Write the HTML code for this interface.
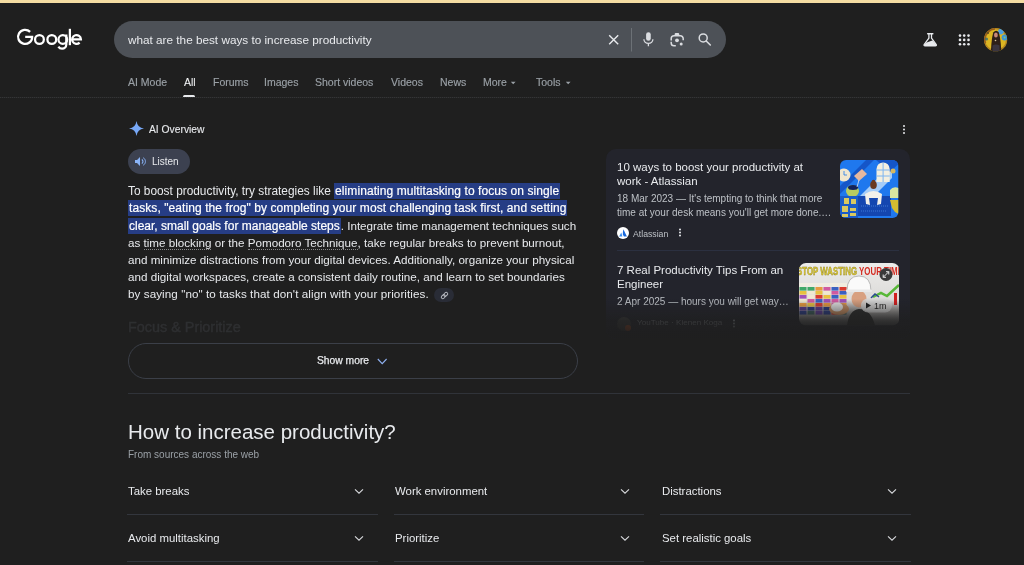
<!DOCTYPE html>
<html><head><meta charset="utf-8">
<style>
*{margin:0;padding:0;box-sizing:border-box}
html,body{width:1024px;height:565px;overflow:hidden;background:#1f1f1f;font-family:"Liberation Sans",sans-serif;color:#e8eaed}
.abs{position:absolute}
#topbar{position:absolute;left:0;top:0;width:1024px;height:3px;background:#f4dca2}
#logo{left:17px;top:24px;font-size:24px;color:#fff;letter-spacing:-0.5px}
#search{left:114px;top:21px;width:612px;height:37px;border-radius:19px;background:#4d5157}
#q{left:128px;top:33px;font-size:11.75px;color:#e8eaed;white-space:nowrap}
.tab{position:absolute;top:76.3px;font-size:10.5px;color:#9aa0a6;white-space:nowrap;-webkit-text-stroke:0.15px #9aa0a6}
#hline{left:0;top:97px;width:1024px;height:1px;background:repeating-linear-gradient(90deg,#343536 0 1px,#262627 1px 2px)}
#aio{left:149px;top:123.7px;font-size:10.3px;color:#e8eaed;white-space:nowrap;-webkit-text-stroke:0.1px #e8eaed}
#listen{left:128px;top:149px;width:62px;height:25px;border-radius:13px;background:#3c4150}
#listen span{position:absolute;left:24px;top:7.2px;font-size:10px;color:#e8eaed}
#para{left:128px;top:183.3px;width:460px;font-size:12px;line-height:17px;color:#e8eaed}
.pl{white-space:nowrap;height:17px}
.r{font-size:11.65px}
#para mark{background:#263d85;color:#fff;padding:1px 1px;-webkit-text-stroke:0.2px #fff}
.chip{display:inline-block;position:relative;margin-left:5.6px;width:19.5px;height:14px;border-radius:7px;background:#292c36;vertical-align:-3.8px}
.dl{border-bottom:1px dotted #8a8a8a}
#focus{left:128px;top:319px;font-size:14.4px;font-weight:normal;color:#2e2f31;white-space:nowrap;-webkit-text-stroke:0.45px #2e2f31}
#showmore{left:128px;top:343px;width:450px;height:36px;border-radius:18px;border:1px solid #3b3f48}
#showmore span{position:absolute;left:188px;top:11.4px;font-size:10.3px;color:#e8eaed;-webkit-text-stroke:0.25px #e8eaed}
#div1{left:128px;top:393px;width:782px;height:1px;background:#303339}
#card{left:606px;top:149px;width:304px;height:190px;border-radius:10px;background:#23242c;overflow:hidden}
.ct{position:absolute;font-size:11.5px;line-height:14px;color:#e8eaed}
.cs{position:absolute;font-size:10px;line-height:14px;color:#bdc1c6;white-space:nowrap}
#h2{left:128px;top:419.5px;font-size:20.5px;color:#e8eaed;white-space:nowrap}
#sub{left:128px;top:449px;font-size:10px;color:#9aa0a6;white-space:nowrap}
.acc{position:absolute;width:250px;height:1px;background:#3c4043}
.at{position:absolute;font-size:11.4px;color:#e8eaed;white-space:nowrap}
.chev{position:absolute;width:12px;height:8px}
#wrap{position:absolute;left:0;top:0;width:1024px;height:565px;will-change:transform}
</style></head><body><div id="wrap">
<div id="topbar"></div>
<svg class="abs" style="left:0;top:0" width="90" height="56" viewBox="0 0 90 56">
<g stroke="#fff" stroke-width="2.25" fill="none">
<path d="M30.1 31.9 A7.05 7.05 0 1 0 32.15 36.9 H25.2"/>
<circle cx="39.45" cy="39.5" r="4.4"/>
<circle cx="51.8" cy="39.5" r="4.4"/>
<circle cx="62.8" cy="39.5" r="4.35"/>
<path d="M66.3 34.4 V44.6 A4.1 4.1 0 0 1 62.2 48.7 A4.3 4.3 0 0 1 58.4 46.6"/>
<path d="M69.9 28.8 V45.2"/>
<path d="M72.2 39.3 H80.9 A4.4 4.4 0 1 0 79.6 42.6"/>
</g></svg>
<div class="abs" id="search"></div>
<div class="abs" id="q">what are the best ways to increase productivity</div>
<!-- search icons -->
<svg class="abs" style="left:600px;top:21px" width="120" height="37" viewBox="0 0 120 37">
  <path d="M9.2 14.3 L18.2 23.3 M18.2 14.3 L9.2 23.3" stroke="#e8eaed" stroke-width="1.4" fill="none"/>
  <rect x="31" y="7" width="0.9" height="23.5" fill="#70757a"/>
  <rect x="46.1" y="11.25" width="4.65" height="8.5" rx="2.33" fill="#dadce0"/>
  <path d="M43.9 18.3 A4.5 4.1 0 0 0 52.9 18.3 M48.4 22.3 V25.3" stroke="#dadce0" stroke-width="1.3" fill="none"/>
  <path d="M71.2 19.4 V17.6 A2.8 2.8 0 0 1 74 14.8 H80.4 A2.8 2.8 0 0 1 83.2 17.6 V19.3 M71.2 20.7 V21.9 A2.8 2.8 0 0 0 74 24.7 H75.8" stroke="#dadce0" stroke-width="1.5" fill="none"/>
  <path d="M74.6 14.2 V13.4 A1.3 1.3 0 0 1 75.9 12.1 H78 A1.3 1.3 0 0 1 79.3 13.4 V14.2z" fill="#dadce0"/>
  <circle cx="77" cy="19.3" r="1.9" fill="#dadce0"/>
  <circle cx="81.2" cy="23.1" r="1.5" fill="#dadce0"/>
  <circle cx="103.2" cy="16.9" r="4" stroke="#dadce0" stroke-width="1.5" fill="none"/>
  <path d="M106.2 20 L110.3 24" stroke="#dadce0" stroke-width="1.6" fill="none" stroke-linecap="round"/>
</svg>
<!-- right header icons -->
<svg class="abs" style="left:920px;top:28px" width="100" height="26" viewBox="0 0 100 26">
  <defs><clipPath id="av"><circle cx="75.6" cy="11.7" r="11.6"/></clipPath></defs>
  <path d="M7.7 5.7 H12.8" stroke="#e8eaed" stroke-width="1.5" fill="none" stroke-linecap="round"/>
  <path d="M8.9 6 V10.2 L4.3 16.4 Q3.5 17.9 5.1 17.9 H15.3 Q16.9 17.9 16.1 16.4 L11.5 10.2 V6" stroke="#e8eaed" stroke-width="1.3" fill="none" stroke-linejoin="round"/>
  <path d="M6.6 14.5 L12.4 12.4 L16.1 16.4 Q16.9 17.9 15.3 17.9 H5.1 Q3.5 17.9 4.3 16.4z" fill="#e8eaed"/>
  <g fill="#e8eaed">
    <circle cx="40" cy="7.6" r="1.3"/><circle cx="44.2" cy="7.6" r="1.3"/><circle cx="48.5" cy="7.6" r="1.3"/>
    <circle cx="40" cy="11.9" r="1.3"/><circle cx="44.2" cy="11.9" r="1.3"/><circle cx="48.5" cy="11.9" r="1.3"/>
    <circle cx="40" cy="16.2" r="1.3"/><circle cx="44.2" cy="16.2" r="1.3"/><circle cx="48.5" cy="16.2" r="1.3"/>
  </g>
  <g clip-path="url(#av)">
    <rect x="63" y="0" width="26" height="26" fill="#dcb622"/>
    <circle cx="75.6" cy="11.7" r="10.8" stroke="#a0601c" stroke-width="1.8" fill="none" stroke-dasharray="20 48" stroke-dashoffset="-30" opacity="0.9"/>
    <circle cx="75.6" cy="11.7" r="11" stroke="#8a5020" stroke-width="1.2" fill="none" opacity="0.5"/>
    <circle cx="66.5" cy="11" r="1.6" fill="#3a6a70" opacity="0.8"/>
    <circle cx="68" cy="5" r="1" fill="#5a4a20"/>
    <circle cx="81" cy="3.6" r="2.8" fill="#4aa0e6"/>
    <circle cx="84.6" cy="9.6" r="3" fill="#3a96d8"/>
    <circle cx="84.6" cy="9.6" r="1" fill="#8ac070"/>
    <path d="M73.2 4.6 Q76 1 78.8 4.2 Q80.2 9 80.8 16 L81.4 24 H70.8 L71.4 16 Q72 9 73.2 4.6z" fill="#2e2019"/>
    <ellipse cx="75.9" cy="6.9" rx="1.9" ry="2.5" fill="#c88878"/>
    <path d="M72.5 17.5 Q76 15.5 79.5 17.5 V24 H72.5z" fill="#3a3540"/>
    <circle cx="75.5" cy="12.5" r="0.8" fill="#d8c8a0"/>
  </g>
</svg>

<div class="tab" style="left:128px">AI Mode</div>
<div class="tab" style="left:184px;color:#fff">All</div>
<div class="abs" style="left:183px;top:95px;width:12px;height:3px;border-radius:2px;background:#e8eaed"></div>
<div class="tab" style="left:213px">Forums</div>
<div class="tab" style="left:264px">Images</div>
<div class="tab" style="left:315px">Short videos</div>
<div class="tab" style="left:391px">Videos</div>
<div class="tab" style="left:440px">News</div>
<div class="tab" style="left:483px">More</div>
<div class="tab" style="left:536px">Tools</div>
<svg class="abs" style="left:510px;top:80px" width="62" height="7"><path d="M0.8 1.8h4.8l-2.4 2.4z M55.8 1.8h4.8l-2.4 2.4z" fill="#9aa0a6"/></svg>
<div class="abs" id="hline"></div>

<!-- AI overview -->
<svg class="abs" style="left:129px;top:121px" width="15" height="15" viewBox="0 0 16 16">
  <path d="M8 0 Q8.9 7.1 16 8 Q8.9 8.9 8 16 Q7.1 8.9 0 8 Q7.1 7.1 8 0z" fill="#78a9f8"/>
</svg>
<div class="abs" id="aio">AI Overview</div>
<svg class="abs" style="left:900px;top:124px" width="8" height="12"><g fill="#e8eaed"><circle cx="4" cy="2" r="1"/><circle cx="4" cy="5.5" r="1"/><circle cx="4" cy="9" r="1"/></g></svg>
<div class="abs" id="listen"><svg class="abs" style="left:7px;top:8px" width="11" height="9" viewBox="0 0 11 9"><path d="M0 3h2l3-3v9l-3-3h-2z" fill="#8ab4f8"/><path d="M6.8 2.5a2.3 2.3 0 0 1 0 4" stroke="#8ab4f8" stroke-width="1.1" fill="none"/><path d="M8.3 0.8a4.3 4.3 0 0 1 0 7.4" stroke="#8ab4f8" stroke-width="1" fill="none"/></svg><span>Listen</span></div>

<div class="abs" id="para">
<div class="pl"><span style="font-size:11.86px">To boost productivity, try strategies like </span><mark style="letter-spacing:0.08px">eliminating multitasking to focus on single</mark></div>
<div class="pl"><mark style="letter-spacing:0.08px">tasks, "eating the frog" by completing your most challenging task first, and setting</mark></div>
<div class="pl"><mark>clear, small goals for manageable steps</mark><span class="r" style="letter-spacing:-0.02px">. Integrate time management techniques such</span></div>
<div class="pl r">as <span class="dl">time blocking</span> or the <span class="dl">Pomodoro Technique</span>, take regular breaks to prevent burnout,</div>
<div class="pl r">and minimize distractions from your digital devices. Additionally, organize your physical</div>
<div class="pl r" style="letter-spacing:0.015px">and digital workspaces, create a consistent daily routine, and learn to set boundaries</div>
<div class="pl r"><span style="letter-spacing:0.08px">by saying "no" to tasks that don't align with your priorities.</span><span class="chip"><svg width="9" height="9" viewBox="0 0 9 9" style="position:absolute;left:5.3px;top:2.6px"><g transform="rotate(-45 4.5 4.5)" stroke="#b8bbc2" stroke-width="0.95" fill="none"><rect x="0.6" y="3" width="4.4" height="3" rx="1.5"/><rect x="4" y="3" width="4.4" height="3" rx="1.5"/></g></svg></span></div>
</div>

<div class="abs" id="focus">Focus &amp; Prioritize</div>
<div class="abs" id="showmore"><span>Show more</span>
<svg class="abs" style="left:248px;top:14px" width="11" height="8"><path d="M0.8 1l4.4 4.6 4.4-4.6" stroke="#8fb0f0" stroke-width="1.1" fill="none"/></svg></div>
<div class="abs" id="div1"></div>

<!-- right card -->
<div class="abs" id="card">
  <div class="ct" style="left:11px;top:11px;width:210px">10 ways to boost your productivity at work - Atlassian</div>
  <div class="cs" style="left:11px;top:43px">18 Mar 2023 — It's tempting to think that more</div>
  <div class="cs" style="left:11px;top:57px">time at your desk means you'll get more done.…</div>
  <div class="abs" style="left:11px;top:77.8px;width:12px;height:12px;border-radius:6px;background:#fff"></div>
  <svg class="abs" style="left:11px;top:77.8px" width="12" height="12" viewBox="0 0 12 12"><path d="M6.4 2.3 L9.9 9.6 H6.9 L5.9 7.6 Q5.6 5 6.4 2.3z" fill="#1868db"/><path d="M4.3 5.6 L2.1 9.6 H5.4z" fill="#3a8ef0"/></svg>
  <div class="cs" style="left:27px;top:77.5px;font-size:8.7px">Atlassian</div>
  <svg class="abs" style="left:71px;top:78.7px" width="6" height="10"><g fill="#e8eaed"><circle cx="3" cy="1.5" r="1"/><circle cx="3" cy="4.5" r="1"/><circle cx="3" cy="7.5" r="1"/></g></svg>
  <svg class="abs" style="left:234.4px;top:11.4px" width="58.5" height="58" viewBox="0 0 58.5 58">
<defs><clipPath id="t1"><rect width="58.5" height="58" rx="6"/></clipPath></defs>
<g clip-path="url(#t1)">
<rect width="58.5" height="58" fill="#1f78ee"/>
<path d="M0 26 L26 0 H34 L0 34z" fill="#1556c8"/>
<path d="M20 36 L52 4 V18 L34 36z" fill="#a6cdf8"/>
<path d="M36 0 L58.5 0 V4 L50 12z" fill="#1556c8"/>
<path d="M36.5 22 V9 A6.6 6.6 0 0 1 49.7 9 V22z" fill="#f3efe0"/>
<path d="M43.1 3 V22 M36.5 10 H49.7 M36.5 16 H49.7" stroke="#7db4f0" stroke-width="1"/>
<circle cx="4" cy="15" r="6.5" fill="#efe6cf"/>
<path d="M4 11 V15 H7" stroke="#1f78ee" stroke-width="0.8" fill="none"/>
<path d="M14 16 L22 9 L27 14 L19 21z" fill="#e6b8a0"/>
<ellipse cx="12.5" cy="31" rx="6.5" ry="6" fill="#b8cc60"/>
<ellipse cx="13" cy="27.5" rx="5" ry="2.5" fill="#13235a"/>
<path d="M17 27 L19 20" stroke="#dfe6f0" stroke-width="0.8"/>
<rect x="0" y="36" width="18" height="22" fill="#1a5cc8"/>
<rect x="4" y="38" width="5" height="6" fill="#d8c860"/>
<rect x="11" y="39" width="5" height="5" fill="#d8c860"/>
<rect x="2" y="46" width="6" height="6" fill="#d8c860"/>
<rect x="10" y="48" width="6" height="3" fill="#d8c860"/>
<rect x="2" y="54" width="6" height="3" fill="#d8c860"/>
<rect x="10" y="53" width="6" height="3" fill="#d8c860"/>
<rect x="18" y="36" width="33" height="20" fill="#1446b0"/>
<path d="M21 46 H48 M21 51 H46" stroke="#4a86e0" stroke-width="0.8" stroke-dasharray="1 1"/>
<ellipse cx="33.5" cy="25" rx="3.3" ry="4" fill="#6a3a22"/>
<circle cx="33.5" cy="21.5" r="1.8" fill="#6a3a22"/>
<path d="M25 34 Q33.5 28 42 34 L41 44 L37 45 L38 38 H29 L30 45 L26 44z" fill="#f2f0ea"/>
<path d="M50 30 Q53 26 58.5 28 V38 H50z" fill="#d9e6a0"/>
<path d="M50 40 H58.5 V54 Q54 52 52 48z" fill="#d4bc30"/>
<circle cx="53" cy="11" r="2.5" fill="#d7b860"/>
</g></svg>
  <div class="abs" style="left:11px;top:101px;width:282px;height:1px;background:#2b3040"></div>
  <div class="ct" style="left:11px;top:114px;width:180px">7 Real Productivity Tips From an Engineer</div>
  <div class="cs" style="left:11px;top:146px">2 Apr 2025 — hours you will get way…</div>
  <div class="abs" style="left:11px;top:167.5px;width:14px;height:14px;border-radius:7px;background:#3a3a3a"></div>
  <div class="abs" style="left:19px;top:176px;width:6px;height:6px;border-radius:3px;background:#b04a20"></div>
  <div class="cs" style="left:31px;top:167px;font-size:8.1px;color:#80848a">YouTube · Kienen Koga</div>
  <svg class="abs" style="left:125px;top:170px" width="6" height="10"><g fill="#9aa0a6"><circle cx="3" cy="1.5" r="1"/><circle cx="3" cy="4.5" r="1"/><circle cx="3" cy="7.5" r="1"/></g></svg>
  <svg class="abs" style="left:192.7px;top:114.1px" width="100.3" height="62.6" viewBox="0 0 100.3 62.6">
<defs><clipPath id="t2"><rect width="100.3" height="62.6" rx="7"/></clipPath>
<linearGradient id="g2" x1="0" y1="0" x2="0" y2="1"><stop offset="0" stop-color="#ececea"/><stop offset="0.6" stop-color="#dcdad8"/><stop offset="0.78" stop-color="#9a9896"/><stop offset="1" stop-color="#4a4a4c"/></linearGradient></defs>
<g clip-path="url(#t2)">
<rect width="100.3" height="62.6" fill="url(#g2)"/>
<text x="-2" y="12.5" font-family="Liberation Sans" font-weight="bold" font-size="10" fill="#e2d030" stroke="#8a7a20" stroke-width="0.4" textLength="60" lengthAdjust="spacingAndGlyphs">STOP WASTING</text>
<text x="60" y="12.5" font-family="Liberation Sans" font-weight="bold" font-size="10" fill="#d42a20" textLength="44" lengthAdjust="spacingAndGlyphs">YOUR TIME</text>
<rect x="0" y="20" width="48" height="4" fill="#f0ece0"/>
<rect x="0.5" y="24" width="7" height="3.6" fill="#40a868"/>
<rect x="0.5" y="28" width="7" height="3.6" fill="#e8c040"/>
<rect x="0.5" y="32" width="7" height="3.6" fill="#a050b8"/>
<rect x="0.5" y="36" width="7" height="3.6" fill="#f0e8d0"/>
<rect x="0.5" y="40" width="7" height="3.6" fill="#e89a40"/>
<rect x="0.5" y="44" width="7" height="3.6" fill="#5a3a90"/>
<rect x="0.5" y="48" width="7" height="3.6" fill="#2a3a80"/>
<rect x="8.5" y="24" width="7" height="3.6" fill="#40a868"/>
<rect x="8.5" y="28" width="7" height="3.6" fill="#f0e8d0"/>
<rect x="8.5" y="32" width="7" height="3.6" fill="#f0e8d0"/>
<rect x="8.5" y="36" width="7" height="3.6" fill="#d05aa0"/>
<rect x="8.5" y="40" width="7" height="3.6" fill="#e8c040"/>
<rect x="8.5" y="44" width="7" height="3.6" fill="#2a3a80"/>
<rect x="8.5" y="48" width="7" height="3.6" fill="#3a5a58"/>
<rect x="16.5" y="24" width="7" height="3.6" fill="#e89a40"/>
<rect x="16.5" y="28" width="7" height="3.6" fill="#e8c040"/>
<rect x="16.5" y="32" width="7" height="3.6" fill="#d83a30"/>
<rect x="16.5" y="36" width="7" height="3.6" fill="#3a60c0"/>
<rect x="16.5" y="40" width="7" height="3.6" fill="#d83a30"/>
<rect x="16.5" y="44" width="7" height="3.6" fill="#5a3a90"/>
<rect x="16.5" y="48" width="7" height="3.6" fill="#5a3a90"/>
<rect x="24.5" y="24" width="7" height="3.6" fill="#d05aa0"/>
<rect x="24.5" y="28" width="7" height="3.6" fill="#f0e8d0"/>
<rect x="24.5" y="32" width="7" height="3.6" fill="#e8c040"/>
<rect x="24.5" y="36" width="7" height="3.6" fill="#a050b8"/>
<rect x="24.5" y="40" width="7" height="3.6" fill="#e89a40"/>
<rect x="24.5" y="44" width="7" height="3.6" fill="#2a3a80"/>
<rect x="24.5" y="48" width="7" height="3.6" fill="#2a3a80"/>
<rect x="32.5" y="24" width="7" height="3.6" fill="#3a60c0"/>
<rect x="32.5" y="28" width="7" height="3.6" fill="#d05aa0"/>
<rect x="32.5" y="32" width="7" height="3.6" fill="#3a60c0"/>
<rect x="32.5" y="36" width="7" height="3.6" fill="#d05aa0"/>
<rect x="32.5" y="40" width="7" height="3.6" fill="#d05aa0"/>
<rect x="32.5" y="44" width="7" height="3.6" fill="#5a3a90"/>
<rect x="32.5" y="48" width="7" height="3.6" fill="#c83028"/>
<rect x="40.5" y="24" width="7" height="3.6" fill="#d83a30"/>
<rect x="40.5" y="28" width="7" height="3.6" fill="#3a60c0"/>
<rect x="40.5" y="32" width="7" height="3.6" fill="#e8c040"/>
<rect x="40.5" y="36" width="7" height="3.6" fill="#a050b8"/>
<rect x="40.5" y="40" width="7" height="3.6" fill="#e89a40"/>
<rect x="40.5" y="44" width="7" height="3.6" fill="#c83028"/>
<rect x="40.5" y="48" width="7" height="3.6" fill="#3a5a58"/>
<ellipse cx="60" cy="36" rx="7.5" ry="8.5" fill="#d8a080"/>
<path d="M48 28 Q48 13 60 13 Q72 13 72 28z" fill="#fafafa" stroke="#a0a0a0" stroke-width="0.7"/>
<rect x="47" y="26.5" width="26" height="2.5" rx="1" fill="#e8e8e8"/>
<path d="M48 62.6 Q50 47 60 46 Q72 46 76 62.6z" fill="#2a2a2a"/>
<ellipse cx="40" cy="46" rx="10" ry="6" fill="#c08a60"/>
<ellipse cx="38" cy="44" rx="6" ry="4.5" fill="#e0e0e0"/>
<path d="M74 34 L82 30 L88 33 L100 22" stroke="#58b838" stroke-width="2.5" fill="none"/>
<path d="M72 35 L76 31 L80 34" stroke="#2a4a90" stroke-width="1.5" fill="none"/>
<rect x="95" y="30" width="3" height="12" fill="#d02020"/>
<circle cx="87" cy="11.5" r="6.5" fill="#3a3a3a"/>
<path d="M84.2 14.3 L89.8 8.7 M84.2 11.5 V14.3 H87 M89.8 11.5 V8.7 H87" stroke="#e8e8e8" stroke-width="1" fill="none"/>
<rect x="62" y="35.5" width="31" height="14" rx="7" fill="#d4d4d4" opacity="0.85"/>
<path d="M67 39.5 V45.5 L72 42.5z" fill="#202020"/>
<text x="75" y="46" font-family="Liberation Sans" font-size="9" fill="#202020">1m</text>
</g></svg>
  <div class="abs" style="left:0;top:150px;width:304px;height:40px;background:linear-gradient(to bottom,rgba(31,31,31,0) 0%,rgba(31,31,31,0.75) 55%,#1f1f1f 100%)"></div>
</div>

<!-- bottom -->
<div class="abs" id="h2">How to increase productivity?</div>
<div class="abs" id="sub">From sources across the web</div>

<div class="at" style="left:128px;top:485px">Take breaks</div>
<div class="at" style="left:395px;top:485px">Work environment</div>
<div class="at" style="left:662px;top:485px">Distractions</div>
<div class="at" style="left:128px;top:532px">Avoid multitasking</div>
<div class="at" style="left:395px;top:532px">Prioritize</div>
<div class="at" style="left:662px;top:532px">Set realistic goals</div>
<svg class="abs" style="left:0;top:480px" width="1024" height="85">
  <g stroke="#d8dadd" stroke-width="1.1" fill="none">
    <path d="M355 9.3 l4 3.9 4-3.9 M621 9.3 l4 3.9 4-3.9 M888 9.3 l4 3.9 4-3.9 M355 56.3 l4 3.9 4-3.9 M621 56.3 l4 3.9 4-3.9 M888 56.3 l4 3.9 4-3.9"/>
  </g>
  <g fill="#33363d">
    <rect x="127" y="34" width="251" height="1"/><rect x="394" y="34" width="250" height="1"/><rect x="660" y="34" width="251" height="1"/>
    <rect x="127" y="81" width="251" height="1"/><rect x="394" y="81" width="250" height="1"/><rect x="660" y="81" width="251" height="1"/>
  </g>
</svg>
</div></body></html>
